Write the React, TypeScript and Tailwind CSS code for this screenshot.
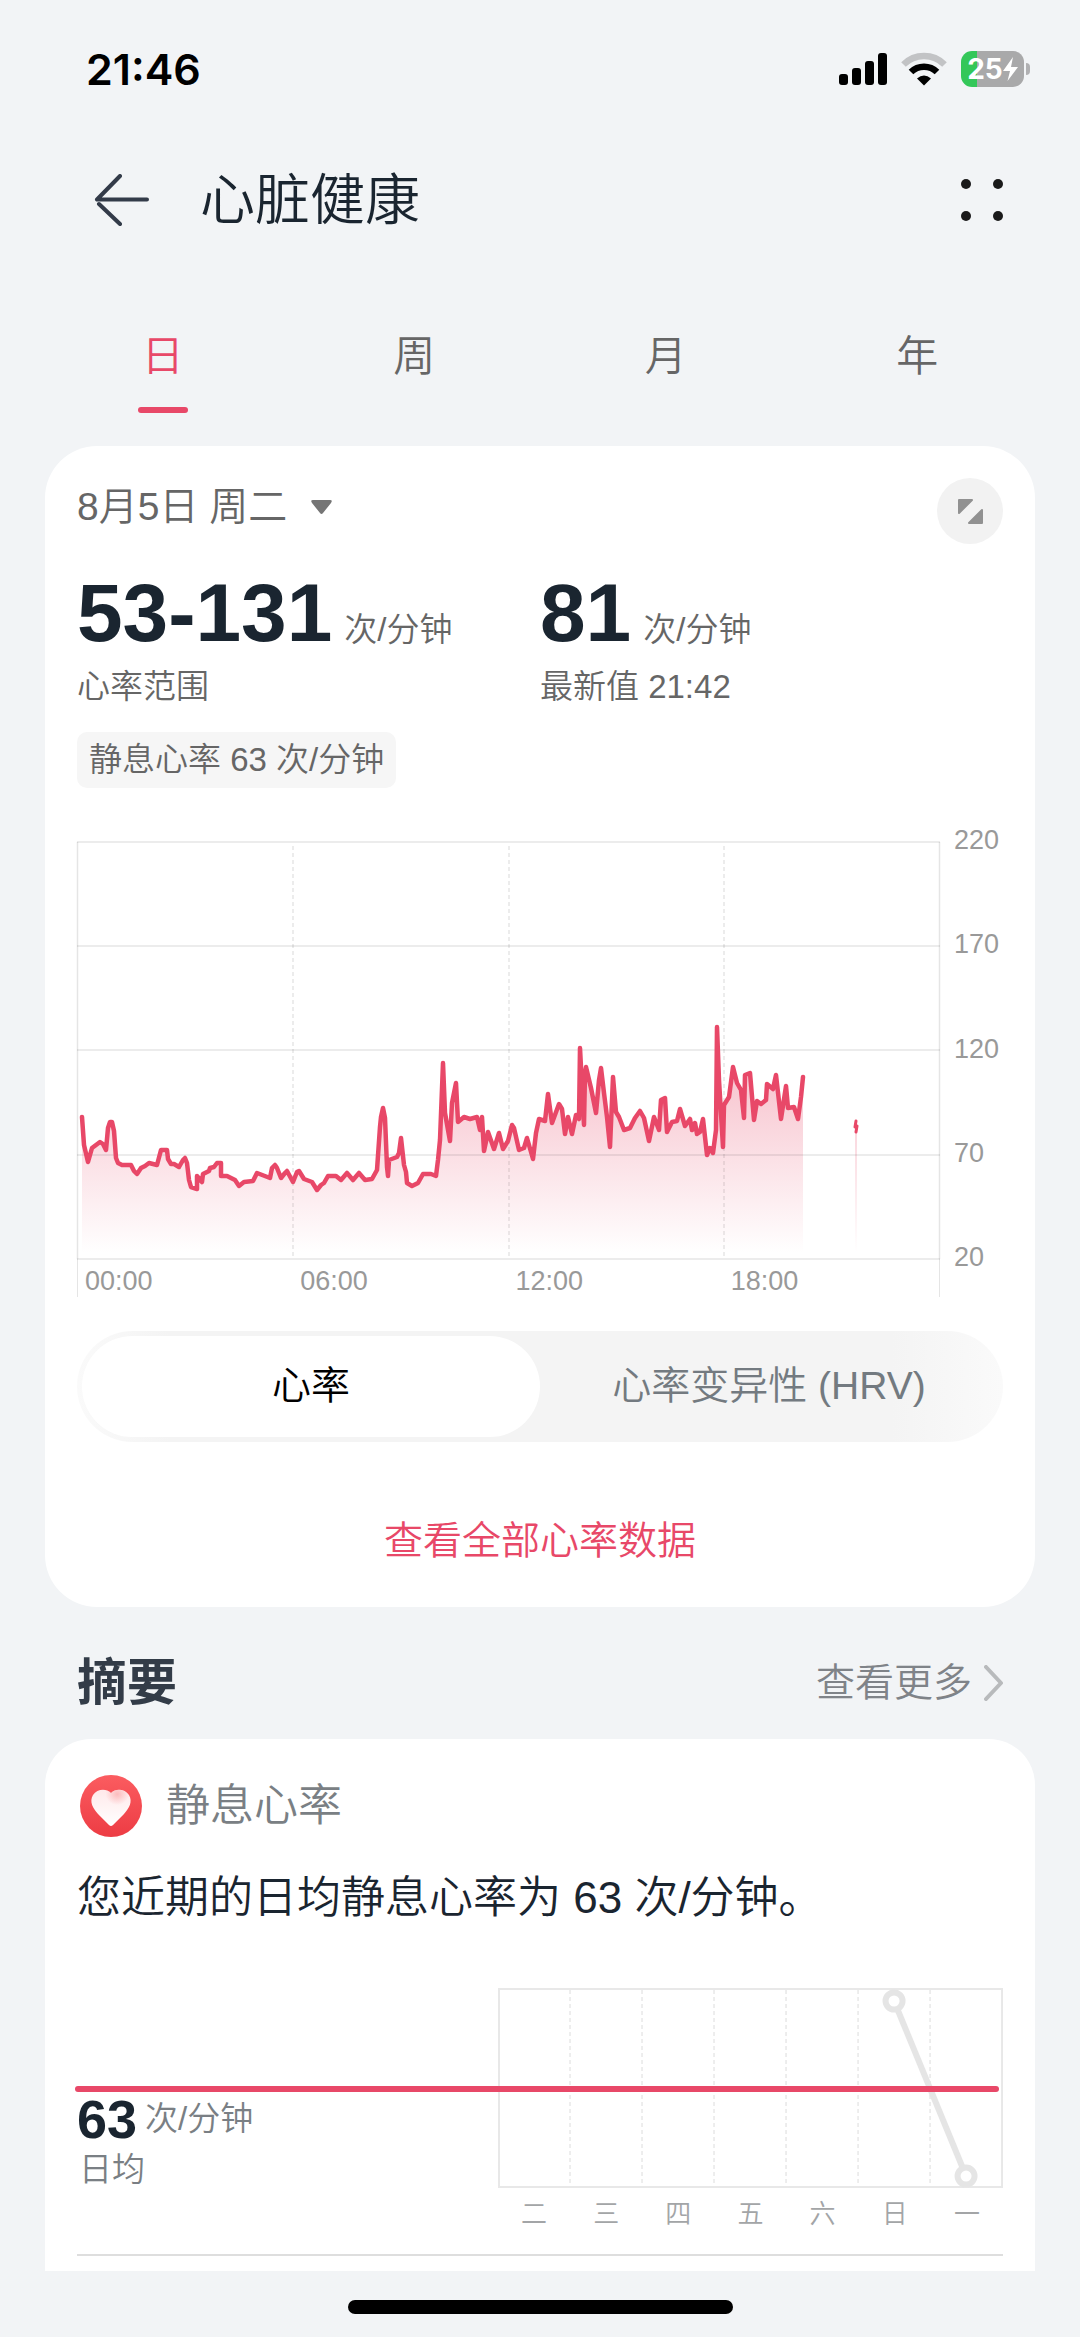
import { useState } from 'react';
import clsx from 'clsx';

const periods = ['日', '周', '月', '年'];
const levels = [220, 170, 120, 70, 20];
const hours = ['00:00', '06:00', '12:00', '18:00'];
const weekdays = ['二', '三', '四', '五', '六', '日', '一'];
const series = ['心率', '心率变异性 (HRV)'];

// x,y pairs in chart units
const heartRate =
  '6,276 8,304 12,321 16,307 20,304 24,301 27,303 30,309 32,287 34,281 36,281 38,290 40,317 42,322 46,324 55,324 58,330 61,333 65,327 69,325 73,322 81,324 85,309 91,309 92,318 95,323 98,323 103,326 107,319 109,317 111,322 113,339 115,346 121,348 121,335 126,341 127,333 133,330 134,327 138,326 141,322 145,322 145,335 151,335 159,339 163,345 168,341 177,340 181,332 194,337 196,327 199,324 201,327 205,337 209,332 211,330 217,341 221,331 223,330 228,338 236,341 241,349 245,344 248,342 252,335 260,335 265,339 271,332 277,339 283,332 289,339 296,338 301,329 304,286 305,276 307,267 309,277 311,326 312,335 313,319 321,316 323,312 325,297 328,324 330,331 331,342 336,345 342,342 347,333 355,333 360,335 362,319 364,299 367,222 369,272 374,300 376,262 380,242 382,281 388,276 394,278 401,276 404,289 406,276 408,310 412,291 418,308 423,292 427,308 432,300 436,284 438,287 443,309 448,307 451,297 457,318 460,292 463,278 469,280 472,253 476,282 483,263 486,268 489,293 492,276 496,293 500,274 503,278 504,207 508,284 509,232 510,226 515,247 520,272 523,239 525,227 528,252 531,276 534,306 537,236 540,271 543,276 548,289 554,287 559,277 564,270 568,277 573,300 578,276 583,289 585,259 589,257 591,291 596,281 601,280 604,268 609,285 614,278 616,289 619,282 621,293 624,291 627,278 631,314 634,307 637,312 640,289 641,186 643,239 647,306 648,264 653,256 657,226 661,242 665,249 668,277 669,234 674,232 678,279 681,260 685,263 690,259 691,243 697,248 700,234 705,278 710,245 712,267 718,266 722,278 725,256 727,236';

function StatusBar() {
  return (
    <div className="flex h-[138px] items-center justify-between pl-[86px] pr-[50px]">
      <span className="font-['Inter',sans-serif] text-[43px] font-semibold leading-none text-black">21:46</span>
      <div className="flex items-center gap-[14px]">
        <svg width="48" height="33" viewBox="0 0 48 33" aria-hidden="true">
          <rect x="0" y="21" width="9" height="11" rx="3" />
          <rect x="13" y="15" width="9" height="17" rx="3" />
          <rect x="26" y="8" width="9" height="24" rx="3" />
          <rect x="39" y="0" width="9" height="32" rx="3" />
        </svg>
        <svg width="46" height="34" viewBox="0 0 46 34" fill="none" aria-hidden="true">
          <path d="M2.5 12.5A29 29 0 0 1 43.5 12.5" stroke="#c2c3c5" strokeWidth="6.5" />
          <path d="M10 20A18.5 18.5 0 0 1 36 20" stroke="#000" strokeWidth="6.5" />
          <path d="M16 26.5Q23 20.5 30 26.5L23 33.5Z" fill="#000" />
        </svg>
        <div className="flex items-center gap-[2px]">
          <div className="flex h-9 w-[63px] items-center justify-center rounded-[11px] bg-linear-to-r from-[#34c759] from-25% to-[#a9a9aa] to-25%">
            <span className="font-['Inter',sans-serif] text-[28px] font-bold leading-none text-white">25</span>
            <svg width="15" height="24" viewBox="0 0 15 24" fill="#fff" aria-hidden="true">
              <path d="M10 0L0 14H7L4.5 24L15 10H8Z" />
            </svg>
          </div>
          <span className="h-3 w-1 rounded-r-full bg-[#b0b0b2]" />
        </div>
      </div>
    </div>
  );
}

function HeartRateChart() {
  return (
    <div className="mt-[54px]">
      <div className="flex">
        <svg viewBox="1 1 863 417" className="min-w-0 flex-1 overflow-visible" role="img" aria-label="心率">
          <defs>
            <linearGradient id="rateFill" gradientUnits="userSpaceOnUse" x1="0" y1="186" x2="0" y2="412">
              <stop offset="0" stopColor="#e84868" stopOpacity="0.4" />
              <stop offset="1" stopColor="#e84868" stopOpacity="0" />
            </linearGradient>
          </defs>
          <polygon points={`6,418 ${heartRate} 727,418`} fill="url(#rateFill)" />
          <rect x="779" y="290" width="2" height="122" fill="url(#rateFill)" />
          <g stroke="#000" strokeOpacity="0.1" strokeWidth="1.5">
            {[1, 105, 209, 314, 418].map((y) => (
              <line key={y} x1="1" x2="864" y1={y} y2={y} />
            ))}
            <line x1="1.5" x2="1.5" y1="1" y2="418" />
            <line x1="863.5" x2="863.5" y1="1" y2="418" />
            {[217, 433, 648].map((x) => (
              <line key={x} x1={x} x2={x} y1="5" y2="418" strokeDasharray="4 3" />
            ))}
          </g>
          <g fill="none" stroke="#e84868" strokeWidth="4.5" strokeLinejoin="round" strokeLinecap="round">
            <polyline points={heartRate} />
            <polyline points="780,280 779,286 781,285 780,291" strokeWidth="3" />
          </g>
        </svg>
        <div className="-mb-3 -mt-4 flex w-[63px] flex-col justify-between pl-[14px] text-[27px] leading-7 text-[#999999]">
          {levels.map((level) => (
            <span key={level}>{level}</span>
          ))}
        </div>
      </div>
      <div className="mr-[63px] grid h-[38px] grid-cols-4 border-x border-[#e5e5e5] pt-2 text-[27px] leading-7 text-[#999999]">
        {hours.map((hour) => (
          <span key={hour} className="pl-[7px]">
            {hour}
          </span>
        ))}
      </div>
    </div>
  );
}

function RestingChart() {
  return (
    <svg viewBox="0 0 505 200" className="w-full" role="img" aria-label="静息心率">
      <rect x="1" y="1" width="503" height="198" fill="none" stroke="#e8e8e8" strokeWidth="2" />
      {[72, 144, 216, 288, 360, 432].map((x) => (
        <line key={x} x1={x} x2={x} y1="2" y2="198" stroke="#e8e8e8" strokeWidth="1.5" strokeDasharray="4 3" />
      ))}
      <g stroke="#e5e5e5" strokeWidth="6" fill="#fff">
        <line x1="396" y1="13" x2="468" y2="188" />
        <circle cx="396" cy="13" r="8.5" />
        <circle cx="468" cy="188" r="8.5" />
      </g>
    </svg>
  );
}

export default function App() {
  const [period, setPeriod] = useState('日');
  const [active, setActive] = useState('心率');

  return (
    <div className="min-h-screen bg-[#f2f4f6] font-['Liberation_Sans','Noto_Sans_CJK_SC',sans-serif] font-[350] text-[#1a2530]">
      <StatusBar />

      <header className="flex h-[124px] items-center pl-[76px] pr-[74px]">
        <button type="button" aria-label="返回" className="px-[18px]">
          <svg width="56" height="52" viewBox="0 0 56 52" fill="none" stroke="#333b49" strokeWidth="4" strokeLinecap="round" aria-hidden="true">
            <path d="M26 2L3 25.5H53M5 30L26 50" strokeLinejoin="round" />
          </svg>
        </button>
        <h1 className="ml-8 flex-1 text-[55px] leading-[72px]">心脏健康</h1>
        <button type="button" aria-label="更多">
          <svg width="48" height="48" viewBox="0 0 48 48" fill="#1a1a1a" aria-hidden="true">
            <circle cx="8" cy="8" r="5" />
            <circle cx="40" cy="8" r="5" />
            <circle cx="8" cy="40" r="5" />
            <circle cx="40" cy="40" r="5" />
          </svg>
        </button>
      </header>

      <nav className="mb-[33px] grid grid-cols-4 px-[37px] pt-[65px]">
        {periods.map((item) => (
          <button
            key={item}
            type="button"
            onClick={() => setPeriod(item)}
            className={clsx('flex flex-col items-center text-[42px] leading-[60px]', item === period ? 'text-[#e84868]' : 'text-[#666666]')}
          >
            {item}
            <span className={clsx('mt-5 h-[6px] w-[50px] rounded-full', item === period && 'bg-[#e84868]')} />
          </button>
        ))}
      </nav>

      <main className="px-[45px]">
        <section className="rounded-[52px] bg-white px-8 pb-9 pt-8">
          <div className="flex items-start justify-between">
            <button type="button" className="flex items-center gap-6 text-[39px] leading-[58px] text-[#666666]">
              8月5日 周二
              <svg width="21" height="15" viewBox="0 0 21 15" fill="#757575" aria-hidden="true">
                <path d="M2 0H19Q22 0 20 3L12 13Q10.5 15 9 13L1 3Q-1 0 2 0Z" />
              </svg>
            </button>
            <button type="button" aria-label="全屏" className="flex size-[66px] items-center justify-center rounded-full bg-[#f2f2f2]">
              <svg width="25" height="25" viewBox="0 0 25 25" fill="#919191" stroke="#919191" strokeWidth="2" strokeLinejoin="round" aria-hidden="true">
                <path d="M1 1H14L1 14Z" />
                <path d="M24 11V24H11Z" />
              </svg>
            </button>
          </div>

          <div className="mt-[29px] grid grid-cols-2 text-[33px] leading-10 text-[#666666]">
            <div>
              <div className="flex items-baseline gap-3">
                <span className="text-[82px] font-bold leading-[80px] text-[#1a2530]">53-131</span>
                次/分钟
              </div>
              <p className="mt-[14px]">心率范围</p>
            </div>
            <div>
              <div className="flex items-baseline gap-3">
                <span className="text-[82px] font-bold leading-[80px] text-[#1a2530]">81</span>
                次/分钟
              </div>
              <p className="mt-[14px]">最新值 21:42</p>
            </div>
          </div>
          <p className="mt-[25px] w-fit rounded-[10px] bg-[#f6f6f6] px-3 text-[33px] leading-[56px] text-[#666666]">静息心率 63 次/分钟</p>

          <HeartRateChart />

          <div className="mt-[34px] grid grid-cols-2 rounded-full bg-[linear-gradient(90deg,#fafafa,#f4f4f4_10%,#f4f4f4_88%,#fafafa)] p-[5px] text-[39px]">
            {series.map((name) => (
              <button
                key={name}
                type="button"
                onClick={() => setActive(name)}
                className={clsx('h-[101px] rounded-full', name === active ? 'bg-white text-black' : 'text-[#737a80]')}
              >
                {name}
              </button>
            ))}
          </div>

          <a href="#all" className="mt-[69px] block text-center text-[39px] leading-[60px] text-[#e84868]">
            查看全部心率数据
          </a>
        </section>

        <div className="flex items-center justify-between px-8 pb-5 pt-10">
          <h2 className="text-[50px] font-bold leading-[72px] text-[#333c48]">摘要</h2>
          <a href="#more" className="flex items-center gap-3 text-[39px] leading-[72px] text-[#7f8388]">
            查看更多
            <svg width="19" height="36" viewBox="0 0 19 36" fill="none" stroke="#b8babc" strokeWidth="4" strokeLinecap="round" strokeLinejoin="round" aria-hidden="true">
              <path d="M2 2L17 18L2 34" />
            </svg>
          </a>
        </div>

        <section className="rounded-t-[46px] bg-white px-8 pb-[15px] pt-9">
          <div className="flex items-center gap-6 px-[3px] text-[44px] leading-[60px] text-[#7a7f84]">
            <svg width="62" height="62" viewBox="0 0 62 62" aria-hidden="true">
              <defs>
                <linearGradient id="disc" x1="0" y1="0" x2="0" y2="1">
                  <stop offset="0" stopColor="#fb5c60" />
                  <stop offset="1" stopColor="#ed3c44" />
                </linearGradient>
                <linearGradient id="heart" x1="0" y1="0" x2="0" y2="1">
                  <stop offset="0" stopColor="#ffe9ea" />
                  <stop offset="1" stopColor="#ffffff" />
                </linearGradient>
                <radialGradient id="lobe" cx="0.66" cy="0.12" r="0.3">
                  <stop offset="0" stopColor="#fcbcbd" />
                  <stop offset="1" stopColor="#fcbcbd" stopOpacity="0" />
                </radialGradient>
              </defs>
              <circle cx="31" cy="31" r="31" fill="url(#disc)" />
              <path d="M31 18C26 13 17 14 13 20C9 27 13 33 18 39L29 50Q31 52 33 50L44 39C49 33 53 27 49 20C45 14 36 13 31 18Z" fill="url(#heart)" />
              <path d="M31 18C26 13 17 14 13 20C9 27 13 33 18 39L29 50Q31 52 33 50L44 39C49 33 53 27 49 20C45 14 36 13 31 18Z" fill="url(#lobe)" />
            </svg>
            静息心率
          </div>
          <p className="mt-[31px] text-[44px] leading-[60px]">您近期的日均静息心率为 63 次/分钟。</p>

          <div className="relative mt-[60px] flex items-start justify-between">
            <div className="pt-[104px] text-[33px] text-[#7a7f84]">
              <div className="flex items-center gap-2 leading-[54px]">
                <span className="text-[54px] font-bold text-[#1a2530]">63</span>
                次/分钟
              </div>
              <p className="pl-[2px] leading-[48px]">日均</p>
            </div>
            <div className="w-6/11">
              <RestingChart />
              <div className="mt-2 grid grid-cols-7 text-center text-[26px] leading-9 text-[#a3a5a7]">
                {weekdays.map((day) => (
                  <span key={day}>{day}</span>
                ))}
              </div>
            </div>
            <span className="absolute -left-[2px] right-1 top-[98px] h-[6px] rounded-full bg-[#e84868]" />
          </div>
          <hr className="mt-[22px] border-t-2 border-[#dedede]" />
        </section>
      </main>

      <div className="flex justify-center pb-5 pt-[29px]">
        <span className="h-[14px] w-[385px] rounded-full bg-black" />
      </div>
    </div>
  );
}
